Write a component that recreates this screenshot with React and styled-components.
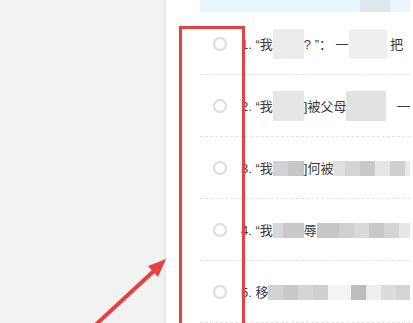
import React from 'react';
import styled, { createGlobalStyle } from 'styled-components';

const GlobalStyle = createGlobalStyle`
  html, body {
    margin: 0;
    padding: 0;
    background: #fff;
  }
  body {
    width: 413px;
    height: 323px;
    overflow: hidden;
    font-family: "Liberation Sans", "Noto Sans CJK SC", sans-serif;
  }
`;

const Page = styled.div`
  position: relative;
  display: flex;
  width: 413px;
  height: 323px;
  overflow: hidden;
`;

const Sidebar = styled.div`
  width: 164px;
  flex-shrink: 0;
  background: #f2f2f2;
  border-right: 2px solid #e8e8e8;
`;

const Main = styled.div`
  flex: 1;
  min-width: 0;
  background: #fff;
  padding: 0 3px 0 34px;
`;

const Banner = styled.div`
  height: 12px;
  background: #e7f5fc;
  display: flex;
  justify-content: flex-end;
  padding-right: 20px;
`;

const BannerBlur = styled.div`
  width: 30px;
  height: 12px;
  background: #dde7ec;
`;

const List = styled.div`
  margin-top: 1px;
`;

const Row = styled.div`
  height: 62px;
  box-sizing: border-box;
  display: flex;
  align-items: center;
  border-bottom: 1px dashed #e4e4e4;
  white-space: pre;
  overflow: hidden;
`;

const Radio = styled.span`
  width: 14px;
  height: 14px;
  box-sizing: border-box;
  border: 2px solid #dcdcdc;
  border-radius: 50%;
  margin-left: 13px;
  flex-shrink: 0;
`;

const Label = styled.span`
  margin-left: 14px;
  font-size: 13px;
  color: #3a3a3a;
  display: flex;
  align-items: center;
  height: 30px;
`;

const Cell = styled.span`
  display: inline-block;
  flex-shrink: 0;
  width: ${p => p.$w || 15}px;
  height: ${p => (p.$tall ? 30 : 15)}px;
  background: ${p => p.$c};
  align-self: ${p => (p.$tall ? 'stretch' : 'center')};
  margin-top: ${p => (p.$tall ? 0 : 2)}px;
`;

const Frame = styled.div`
  position: absolute;
  left: 179px;
  top: 26px;
  width: 66px;
  height: 320px;
  box-sizing: border-box;
  border: 3px solid #e84040;
  border-bottom: none;
`;

const ArrowSvg = styled.svg`
  position: absolute;
  left: 0;
  top: 0;
  pointer-events: none;
`;

const Blur = ({ cells }) =>
  cells.map((c, i) => <Cell key={i} $c={c[0]} $w={c[1]} $tall={c[2]} />);

const rows = [
  [
    '1. “我',
    [['#ececec', 31, true]],
    '? ”： 一',
    [['#efefef', 38, true]],
    ' 把',
  ],
  [
    '2. “我',
    [['#e6e6e6', 31, true]],
    ']被父母',
    [['#e2e2e2', 40, true]],
    '   —',
  ],
  [
    '3. “我',
    [['#d2d2d2', 15], ['#c6c6c6', 16]],
    ']何被',
    [['#e0e0e0', 12], ['#d4d4d4', 15], ['#c8c8c8', 15], ['#e6e6e6', 15], ['#cfcfcf', 15], ['#e8e8e8', 15]],
    '',
  ],
  [
    '4. “我',
    [['#d8d8d8', 10], ['#c9c9c9', 21]],
    '辱',
    [['#c6c6c6', 22], ['#d0d0d0', 15], ['#dadada', 15], ['#c8c8c8', 15], ['#d5d5d5', 15], ['#e6e6e6', 15]],
    '',
  ],
  [
    '5. 移',
    [['#d2d2d2', 15], ['#c8c8c8', 15], ['#d5d5d5', 15], ['#cfcfcf', 15], ['#f4f4f4', 23], ['#bdbdbd', 15], ['#eeeeee', 15], ['#dcdcdc', 15], ['#d4d4d4', 15]],
    '',
    [],
    '',
  ],
];

export default function App() {
  return (
    <>
      <GlobalStyle />
      <Page>
        <Sidebar />
        <Main>
          <Banner>
            <BannerBlur />
          </Banner>
          <List>
            {rows.map((r, i) => (
              <Row key={i}>
                <Radio />
                <Label>
                  {r[0]}
                  <Blur cells={r[1]} />
                  {r[2]}
                  <Blur cells={r[3]} />
                  {r[4]}
                </Label>
              </Row>
            ))}
          </List>
        </Main>
        <Frame />
        <ArrowSvg width="413" height="323" viewBox="0 0 413 323">
          <line x1="90" y1="330" x2="156" y2="269" stroke="#e84040" strokeWidth="4" />
          <polygon points="166,259 148,266 158,277" fill="#e84040" />
        </ArrowSvg>
      </Page>
    </>
  );
}
